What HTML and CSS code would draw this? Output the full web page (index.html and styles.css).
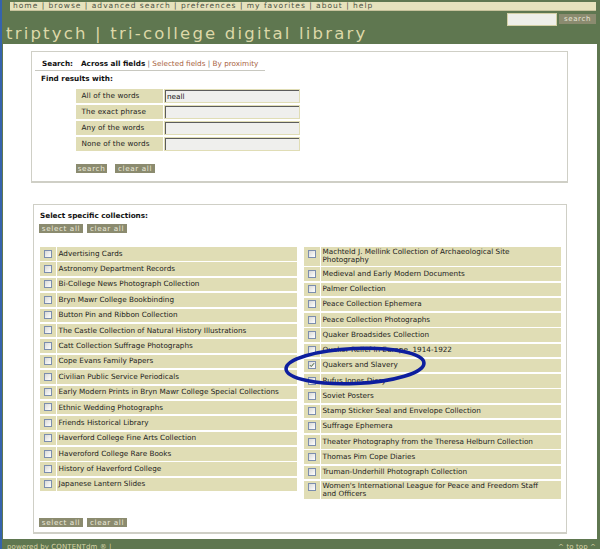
FILE: index.html
```html
<!DOCTYPE html>
<html>
<head>
<meta charset="utf-8">
<title>triptych | tri-college digital library</title>
<link rel="stylesheet" href="styles.css">
</head>
<body>
<div class="nav">home | browse | advanced search | preferences | my favorites | about | help</div>
<div class="header">
  <div class="title">triptych | tri-college digital library</div>
  <div class="qs">
    <div class="qs-input"></div>
    <div class="qs-btn">search</div>
  </div>
</div>
<div class="main">
  <div class="panel search-panel">
    <div class="snav"><b class="slabel">Search:</b><b>Across all fields</b> <span class="sep">|</span> <span class="lnk">Selected fields</span> <span class="sep">|</span> <span class="lnk">By proximity</span></div>
    <div class="find">Find results with:</div>
    <div class="form">
      <div class="flabel">All of the words</div><div class="fcell"><div class="finput">neall</div></div>
      <div class="flabel">The exact phrase</div><div class="fcell"><div class="finput"></div></div>
      <div class="flabel">Any of the words</div><div class="fcell"><div class="finput"></div></div>
      <div class="flabel">None of the words</div><div class="fcell"><div class="finput"></div></div>
    </div>
    <div class="btns">
      <div class="btn w31">search</div>
      <div class="btn w40">clear all</div>
    </div>
  </div>

  <div class="panel coll-panel">
    <div class="ctitle">Select specific collections:</div>
    <div class="cbtns">
      <div class="btn w44">select all</div>
      <div class="btn w40">clear all</div>
    </div>
    <div class="cols">
      <div class="col col-left">
        <div class="row"><div class="cb"><span class="box"></span></div><div class="lbl">Advertising Cards</div></div>
        <div class="row"><div class="cb"><span class="box"></span></div><div class="lbl">Astronomy Department Records</div></div>
        <div class="row"><div class="cb"><span class="box"></span></div><div class="lbl">Bi-College News Photograph Collection</div></div>
        <div class="row"><div class="cb"><span class="box"></span></div><div class="lbl">Bryn Mawr College Bookbinding</div></div>
        <div class="row"><div class="cb"><span class="box"></span></div><div class="lbl">Button Pin and Ribbon Collection</div></div>
        <div class="row"><div class="cb"><span class="box"></span></div><div class="lbl">The Castle Collection of Natural History Illustrations</div></div>
        <div class="row"><div class="cb"><span class="box"></span></div><div class="lbl">Catt Collection Suffrage Photographs</div></div>
        <div class="row"><div class="cb"><span class="box"></span></div><div class="lbl">Cope Evans Family Papers</div></div>
        <div class="row"><div class="cb"><span class="box"></span></div><div class="lbl">Civilian Public Service Periodicals</div></div>
        <div class="row"><div class="cb"><span class="box"></span></div><div class="lbl">Early Modern Prints in Bryn Mawr College Special Collections</div></div>
        <div class="row"><div class="cb"><span class="box"></span></div><div class="lbl">Ethnic Wedding Photographs</div></div>
        <div class="row"><div class="cb"><span class="box"></span></div><div class="lbl">Friends Historical Library</div></div>
        <div class="row"><div class="cb"><span class="box"></span></div><div class="lbl">Haverford College Fine Arts Collection</div></div>
        <div class="row"><div class="cb"><span class="box"></span></div><div class="lbl">Haveroford College Rare Books</div></div>
        <div class="row"><div class="cb"><span class="box"></span></div><div class="lbl">History of Haverford College</div></div>
        <div class="row"><div class="cb"><span class="box"></span></div><div class="lbl">Japanese Lantern Slides</div></div>
      </div>
      <div class="col col-right">
        <div class="row"><div class="cb"><span class="box"></span></div><div class="lbl">Machteld J. Mellink Collection of Archaeological Site Photography</div></div>
        <div class="row"><div class="cb"><span class="box"></span></div><div class="lbl">Medieval and Early Modern Documents</div></div>
        <div class="row"><div class="cb"><span class="box"></span></div><div class="lbl">Palmer Collection</div></div>
        <div class="row"><div class="cb"><span class="box"></span></div><div class="lbl">Peace Collection Ephemera</div></div>
        <div class="row"><div class="cb"><span class="box"></span></div><div class="lbl">Peace Collection Photographs</div></div>
        <div class="row"><div class="cb"><span class="box"></span></div><div class="lbl">Quaker Broadsides Collection</div></div>
        <div class="row"><div class="cb"><span class="box"></span></div><div class="lbl">Quaker Relief in Europe, 1914-1922</div></div>
        <div class="row"><div class="cb"><span class="box checked"><svg viewBox="0 0 8 8" width="6" height="6"><path d="M1.2 4.2 L3 6 L6.8 1.6" fill="none" stroke="#3d5a2e" stroke-width="1.3"/></svg></span></div><div class="lbl">Quakers and Slavery</div></div>
        <div class="row"><div class="cb"><span class="box"></span></div><div class="lbl">Rufus Jones Diary</div></div>
        <div class="row"><div class="cb"><span class="box"></span></div><div class="lbl">Soviet Posters</div></div>
        <div class="row"><div class="cb"><span class="box"></span></div><div class="lbl">Stamp Sticker Seal and Envelope Collection</div></div>
        <div class="row"><div class="cb"><span class="box"></span></div><div class="lbl">Suffrage Ephemera</div></div>
        <div class="row"><div class="cb"><span class="box"></span></div><div class="lbl">Theater Photography from the Theresa Helburn Collection</div></div>
        <div class="row"><div class="cb"><span class="box"></span></div><div class="lbl">Thomas Pim Cope Diaries</div></div>
        <div class="row"><div class="cb"><span class="box"></span></div><div class="lbl">Truman-Underhill Photograph Collection</div></div>
        <div class="row"><div class="cb"><span class="box"></span></div><div class="lbl">Women's International League for Peace and Freedom Staff and Officers</div></div>
      </div>
    </div>
    <div class="cbtns bottom">
      <div class="btn w44">select all</div>
      <div class="btn w40">clear all</div>
    </div>
  </div>
</div>
<div class="footer">
  <span>powered by CONTENTdm ® |</span>
  <span>^ to top ^</span>
</div>
<svg class="annot" width="150" height="46" viewBox="0 0 150 46">
  <ellipse cx="75" cy="23" rx="69" ry="17.5" transform="rotate(-2.5 75 23)" fill="none" stroke="#0d1e9e" stroke-width="3.6"/>
</svg>
</body>
</html>
```
FILE: styles.css
```css
html, body {
  margin: 0;
  padding: 0;
}
body {
  background: #5f7750;
  border-left: 2px solid #3563ad;
  min-height: 549px;
  box-sizing: border-box;
  font-family: "DejaVu Sans", Verdana, sans-serif;
  color: #222;
  position: relative;
  overflow: hidden;
}
.nav {
  margin: 2px 4px 0 8px;
  height: 8px;
  border-bottom: 1px solid #c7c39c;
  background: #e6e2bd;
  color: #4d5344;
  font-size: 7.5px;
  line-height: 8.5px;
  letter-spacing: 1px;
  padding-left: 3px;
  white-space: nowrap;
  overflow: hidden;
}
.header {
  display: flex;
  justify-content: space-between;
  align-items: flex-start;
  height: 33px;
}
.title {
  margin: 12.5px 0 0 4px;
  font-size: 16.5px;
  line-height: 19px;
  letter-spacing: 2.2px;
  color: #ddd8a8;
  white-space: nowrap;
}
.qs {
  display: flex;
  align-items: center;
  gap: 2px;
  margin: 1.5px 4px 0 0;
}
.qs-input {
  width: 48px;
  height: 11px;
  border: 1px solid #d4d0a6;
  background: #efefe9;
}
.qs-btn {
  width: 37px;
  height: 10px;
  line-height: 10px;
  background: #8b8b6f;
  color: #e6e6d6;
  font-size: 7px;
  letter-spacing: 0.6px;
  text-align: center;
}
.main {
  background: #fff;
  margin: 0 3px 0 1px;
  height: 495px;
  padding-top: 7px;
  box-sizing: border-box;
  overflow: hidden;
  font-size: 7.25px;
}
.panel {
  border: 1px solid #cfcfc6;
  border-bottom-width: 2px;
  box-sizing: border-box;
}
.search-panel {
  margin-left: 28px;
  width: 537px;
  height: 132px;
}
.snav {
  margin-left: 3px;
  width: 223px;
  padding: 7px 0 1.5px 7px;
  border-bottom: 1px solid #c8c8c0;
  line-height: 9px;
  white-space: nowrap;
  color: #111;
}
.slabel {
  margin-right: 8px;
}
.sep {
  color: #777;
}
.lnk {
  color: #a9643f;
}
.find {
  margin: 3.5px 0 0 9px;
  font-weight: bold;
  line-height: 9px;
  color: #111;
}
.form {
  margin: 6px 0 0 44px;
  display: grid;
  grid-template-columns: 87px 136px;
  grid-auto-rows: 14px;
  column-gap: 1px;
  row-gap: 2px;
}
.flabel {
  background: #e0ddb5;
  padding-left: 5.5px;
  line-height: 14px;
  color: #222;
  letter-spacing: 0.1px;
}
.fcell {
  background: #e0ddb5;
  padding: 1px;
}
.finput {
  height: 12px;
  box-sizing: border-box;
  border-top: 1px solid #5c5c5c;
  border-left: 1px solid #5c5c5c;
  background: #efefed;
  line-height: 11px;
  padding-left: 1px;
  color: #111;
}
.btns {
  margin: 13px 0 0 44px;
  display: flex;
  gap: 8px;
}
.btn {
  height: 9px;
  line-height: 9px;
  background: #8b8b6f;
  color: #ebeadb;
  font-size: 7.25px;
  letter-spacing: 0.6px;
  text-align: center;
}
.w31 { width: 31px; }
.w40 { width: 40px; }
.w44 { width: 44px; }
.coll-panel {
  margin: 21px 0 0 30px;
  width: 534px;
  padding-bottom: 5px;
}
.ctitle {
  padding: 5.5px 0 0 6px;
  font-weight: bold;
  line-height: 9px;
  color: #111;
}
.cbtns {
  margin: 4.5px 0 0 5px;
  display: flex;
  gap: 4px;
}
.cbtns.bottom {
  margin-top: 19px;
}
.cols {
  margin: 14px 0 0 6px;
  display: flex;
  gap: 7px;
  align-items: flex-start;
}
.col {
  width: 257px;
  display: flex;
  flex-direction: column;
}
.col-left { gap: 1.9px; }
.col-right { gap: 1.75px; }
.row {
  display: grid;
  grid-template-columns: 16px 1fr;
  column-gap: 1px;
}
.cb {
  background: #e0ddb5;
  display: flex;
  justify-content: center;
  align-items: flex-start;
  padding-top: 2.5px;
}
.box {
  width: 8px;
  height: 8px;
  box-sizing: border-box;
  border: 1px solid #7c8eae;
  background: linear-gradient(135deg, #d9d9d6, #ffffff);
  display: flex;
  align-items: center;
  justify-content: center;
}
.lbl {
  background: #e0ddb5;
  min-height: 13.5px;
  box-sizing: border-box;
  padding: 1px 8px 1px 1.5px;
  display: flex;
  align-items: center;
  line-height: 8.3px;
  color: #1c1c1c;
}
.footer {
  display: flex;
  justify-content: space-between;
  padding: 4px 4px 0 5px;
  font-size: 7px;
  line-height: 9px;
  letter-spacing: 0.1px;
  color: #d8d4a8;
}
.annot {
  position: absolute;
  left: 278px;
  top: 343px;
}
```
